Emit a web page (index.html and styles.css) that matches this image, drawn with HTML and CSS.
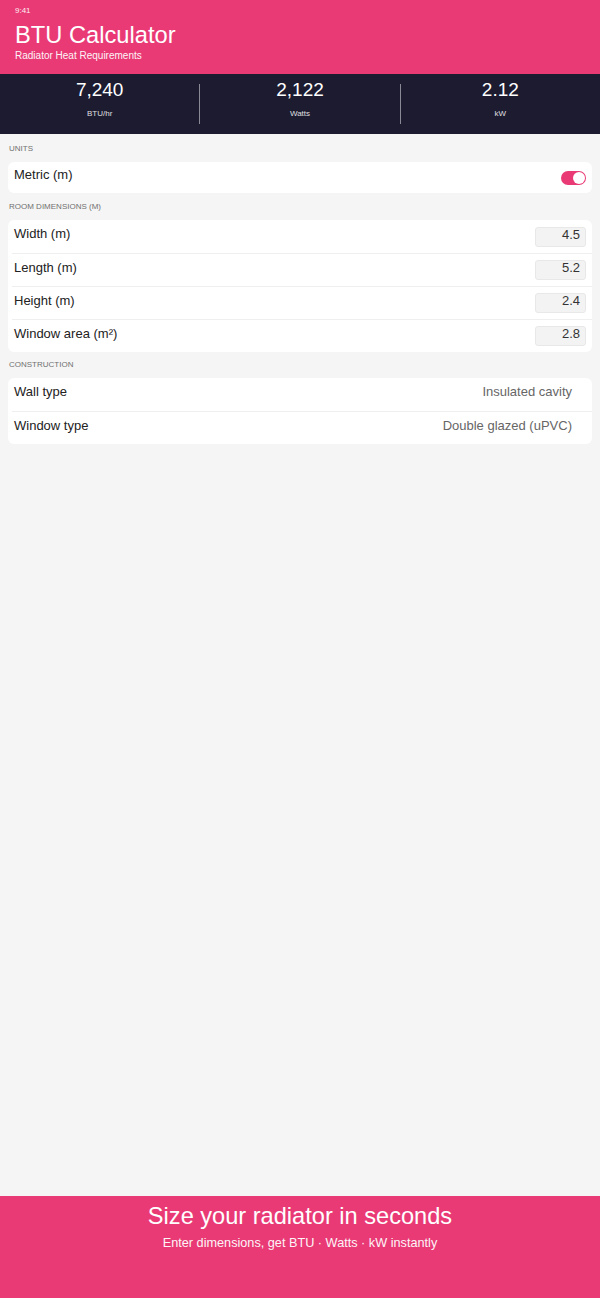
FILE: index.html
```html
<!DOCTYPE html>
<html>
<head>
<meta charset="utf-8">
<link rel="stylesheet" href="styles.css">
</head>
<body>
<div class="app">
  <header class="header">
    <div class="time">9:41</div>
    <h1 class="title">BTU Calculator</h1>
    <div class="subtitle">Radiator Heat Requirements</div>
  </header>
  <section class="stats">
    <div class="stat"><div class="stat-num">7,240</div><div class="stat-label">BTU/hr</div></div>
    <div class="divider"></div>
    <div class="stat"><div class="stat-num">2,122</div><div class="stat-label">Watts</div></div>
    <div class="divider"></div>
    <div class="stat"><div class="stat-num">2.12</div><div class="stat-label">kW</div></div>
  </section>
  <main class="main">
    <div class="section-label section-label-first">UNITS</div>
    <div class="card">
      <div class="row row-units">
        <span class="row-label">Metric (m)</span>
        <span class="toggle"><span class="knob"></span></span>
      </div>
    </div>
    <div class="section-label">ROOM DIMENSIONS (M)</div>
    <div class="card">
      <div class="row"><span class="row-label">Width (m)</span><span class="input">4.5</span></div>
      <div class="row"><span class="row-label">Length (m)</span><span class="input">5.2</span></div>
      <div class="row"><span class="row-label">Height (m)</span><span class="input">2.4</span></div>
      <div class="row"><span class="row-label">Window area (m²)</span><span class="input">2.8</span></div>
    </div>
    <div class="section-label section-label-tight">CONSTRUCTION</div>
    <div class="card">
      <div class="row"><span class="row-label">Wall type</span><span class="row-value">Insulated cavity</span></div>
      <div class="row"><span class="row-label">Window type</span><span class="row-value">Double glazed (uPVC)</span></div>
    </div>
  </main>
  <footer class="footer">
    <div class="footer-title">Size your radiator in seconds</div>
    <div class="footer-sub">Enter dimensions, get BTU · Watts · kW instantly</div>
  </footer>
</div>
</body>
</html>
```

FILE: styles.css
```css
* { box-sizing: border-box; }
html, body { margin: 0; padding: 0; }
body {
  font-family: "Liberation Sans", Arial, sans-serif;
  background: #f5f5f5;
  color: #222;
}
.app {
  width: 600px;
  height: 1298px;
  display: flex;
  flex-direction: column;
}
.header {
  background: #e93a76;
  color: #fff;
  height: 74px;
  padding: 6px 15px 0;
}
.time {
  font-size: 8px;
  line-height: 10px;
  opacity: 0.9;
}
.title {
  margin: 0;
  font-weight: normal;
  font-size: 23.7px;
  line-height: 30px;
  margin-top: 4px;
}
.subtitle {
  font-size: 10px;
  line-height: 12px;
  margin-top: 0;
  opacity: 0.95;
}
.stats {
  background: #1c1b30;
  height: 60px;
  display: flex;
  align-items: flex-start;
}
.stat {
  flex: 1;
  text-align: center;
  color: #fff;
  padding-top: 5px;
}
.divider {
  width: 1px;
  height: 40px;
  margin-top: 10px;
  background: #8a8a96;
}
.stat-num {
  font-size: 19px;
  line-height: 22px;
}
.stat-label {
  font-size: 8px;
  line-height: 10px;
  margin-top: 8px;
  opacity: 0.85;
}
.main {
  flex: 1;
  padding: 0 8px;
}
.section-label {
  font-size: 8px;
  line-height: 10px;
  color: #707070;
  padding: 9px 0 8px 1px;
}
.section-label-first {
  padding-top: 10px;
}
.section-label-tight {
  padding-top: 8px;
}
.card {
  background: #fff;
  border-radius: 6px;
  overflow: hidden;
}
.row {
  height: 33px;
  display: flex;
  align-items: center;
  justify-content: space-between;
  padding: 0 6px 0 2px;
  margin-left: 4px;
  border-top: 1px solid #efefef;
}
.row:first-child { border-top: none; }
.row-units { height: 31px; }
.row-label {
  font-size: 13px;
  line-height: 16px;
  color: #222;
  margin-bottom: 5px;
}
.row-value {
  font-size: 13px;
  line-height: 16px;
  color: #666;
  padding-right: 14px;
  margin-bottom: 5px;
}
.input {
  width: 51px;
  height: 20px;
  background: #f3f3f3;
  border: 1px solid #e8e8e8;
  border-radius: 3px;
  font-size: 13px;
  line-height: 13px;
  text-align: right;
  padding-right: 5px;
  color: #333;
}
.toggle {
  width: 25px;
  height: 14px;
  border-radius: 7px;
  background: #e93a76;
  display: flex;
  justify-content: flex-end;
  align-items: center;
  padding: 1px;
}
.knob {
  width: 12px;
  height: 12px;
  border-radius: 50%;
  background: #fff;
}
.footer {
  background: #e93a76;
  color: #fff;
  height: 102px;
  text-align: center;
  padding-top: 6px;
}
.footer-title {
  font-size: 23.6px;
  line-height: 28px;
}
.footer-sub {
  font-size: 12.7px;
  line-height: 16px;
  margin-top: 5px;
  opacity: 0.95;
}
```
